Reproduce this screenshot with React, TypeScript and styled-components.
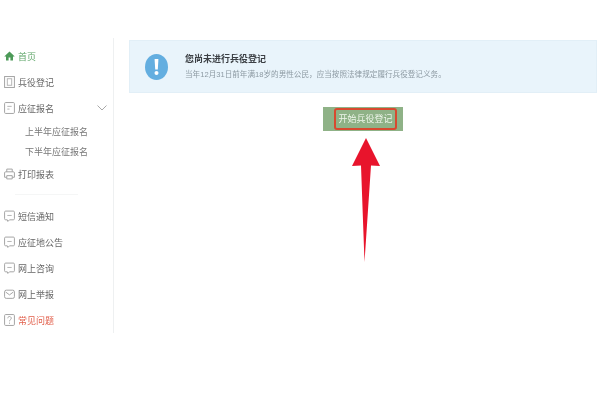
import React from "react";
import styled, { createGlobalStyle } from "styled-components";

const Global = createGlobalStyle`
  html, body { margin: 0; padding: 0; background: #fff; }
  body { font-family: "Liberation Sans", "Noto Sans CJK SC", sans-serif; }
`;

const Page = styled.div`
  position: relative;
  width: 600px;
  height: 400px;
  overflow: hidden;
  padding-top: 38px;
  box-sizing: border-box;
  filter: blur(0.6px);
`;

const Shell = styled.div`
  display: flex;
  height: 295px;
`;

const Sidebar = styled.nav`
  width: 114px;
  flex: none;
  box-sizing: border-box;
  padding-top: 5px;
  border-right: 1px solid #eef0f1;
`;

const Row = styled.div<{ $color?: string }>`
  display: flex;
  align-items: center;
  gap: 3px;
  height: 26px;
  padding-left: 4px;
  padding-right: 6px;
  font-size: 9px;
  color: ${(p) => p.$color ?? "#666"};
`;

const Chevron = styled.svg`
  margin-left: auto;
`;

const SubList = styled.div`
  padding-top: 1px;
  height: 39px;
`;

const SubRow = styled.div`
  height: 20px;
  line-height: 20px;
  padding-left: 25px;
  font-size: 9px;
  color: #777;
`;

const Divider = styled.div`
  height: 1px;
  margin: 7px 35px 8px 15px;
  background: #f5f6f6;
`;

const Main = styled.main`
  flex: 1;
  min-width: 0;
  padding: 2px 3px 0 15px;
  display: flex;
  flex-direction: column;
  align-items: center;
`;

const Banner = styled.section`
  align-self: stretch;
  height: 53px;
  display: flex;
  align-items: center;
  gap: 17px;
  padding-left: 15px;
  box-sizing: border-box;
  background: #e9f4fb;
  border: 1px solid #e2eff7;
`;

const BannerText = styled.div`
  display: flex;
  flex-direction: column;
  gap: 5px;
`;

const Title = styled.div`
  font-size: 9px;
  line-height: 11px;
  font-weight: 700;
  color: #3c4045;
`;

const Desc = styled.div`
  font-size: 7.6px;
  line-height: 10px;
  color: #8d9aa3;
`;

const StartButton = styled.button`
  margin: 14px 0 0;
  width: 80px;
  height: 24px;
  padding: 0 6px 0 11px;
  box-sizing: border-box;
  border: none;
  background: #8fb287;
  display: flex;
  align-items: center;
  justify-content: center;
  font-family: inherit;
`;

const ButtonLabel = styled.span`
  display: block;
  width: 63px;
  height: 22px;
  line-height: 18px;
  box-sizing: border-box;
  border: 2px solid #d8492f;
  border-radius: 3px;
  font-size: 9px;
  text-align: center;
  white-space: nowrap;
  color: #eef5ea;
`;

const ArrowOverlay = styled.svg`
  position: absolute;
  left: 345px;
  top: 130px;
`;

const Outline = ({ children }: { children: React.ReactNode }) => (
  <svg width="11" height="12" viewBox="0 0 10 11" fill="none" stroke="#a3a3a3" strokeWidth="0.9">
    {children}
  </svg>
);

const Bubble = () => (
  <Outline>
    <path d="M1.5 1h7a1 1 0 0 1 1 1v6a1 1 0 0 1-1 1H5L3.500 10.500 3 9H1.500a1 1 0 0 1-1-1V2a1 1 0 0 1 1-1z" />
    <path d="M3 5h4" stroke="#b5b5b5" />
  </Outline>
);

const icons = {
  home: (
    <svg width="11" height="12" viewBox="-0.5 0 11 12">
      <path d="M5 1.500 0 6.200l.6.7L1.500 6v4.500h2.600V7.400h1.800v3.100h2.600V6l.9.900.6-.7z" fill="#4c9a58" />
    </svg>
  ),
  clipboard: (
    <Outline>
      <rect x="0.5" y="0.5" width="9" height="10" />
      <rect x="3" y="2.500" width="4" height="6" stroke="#b5b5b5" />
    </Outline>
  ),
  form: (
    <Outline>
      <rect x="0.5" y="0.5" width="9" height="10" rx="1" />
      <path d="M3 4h4M3 6.500h2" stroke="#b5b5b5" />
    </Outline>
  ),
  printer: (
    <Outline>
      <path d="M2.500 3.500V1h5v2.500" />
      <path d="M2.500 8.500h-2v-4a1 1 0 0 1 1-1h7a1 1 0 0 1 1 1v4h-2" />
      <path d="M2.500 7h5v3h-5z" />
    </Outline>
  ),
  mail: (
    <Outline>
      <rect x="0.5" y="2" width="9" height="7.500" rx="1.500" />
      <path d="M1.500 3.700 5 6.300l3.500-2.600" />
    </Outline>
  ),
  help: (
    <Outline>
      <rect x="0.5" y="0.5" width="9" height="10" rx="1" />
      <path d="M3.400 3.900a1.600 1.600 0 1 1 2.400 1.400c-.6.4-.8.7-.8 1.400M5 7.900v1" />
    </Outline>
  ),
};

export default function App() {
  return (
    <>
      <Global />
      <Page>
        <Shell>
          <Sidebar>
            <Row $color="#5da568">{icons.home}首页</Row>
            <Row>{icons.clipboard}兵役登记</Row>
            <Row>
              {icons.form}应征报名
              <Chevron width="10" height="6" viewBox="0 0 10 6" fill="none" stroke="#a8a8a8" strokeWidth="1">
                <path d="M.5.5 5 5 9.500.5" />
              </Chevron>
            </Row>
            <SubList>
              <SubRow>上半年应征报名</SubRow>
              <SubRow>下半年应征报名</SubRow>
            </SubList>
            <Row>{icons.printer}打印报表</Row>
            <Divider />
            <Row><Bubble />短信通知</Row>
            <Row><Bubble />应征地公告</Row>
            <Row><Bubble />网上咨询</Row>
            <Row>{icons.mail}网上举报</Row>
            <Row $color="#e2604c">{icons.help}常见问题</Row>
          </Sidebar>
          <Main>
            <Banner>
              <svg width="23" height="26" viewBox="0 0 23 26">
                <ellipse cx="11.500" cy="13" rx="11.500" ry="13" fill="#63aee0" />
                <path d="M9.600 5h3.800l-.6 10.500h-2.600z" fill="#fff" />
                <circle cx="11.500" cy="19" r="2" fill="#fff" />
              </svg>
              <BannerText>
                <Title>您尚未进行兵役登记</Title>
                <Desc>当年12月31日前年满18岁的男性公民，应当按照法律规定履行兵役登记义务。</Desc>
              </BannerText>
            </Banner>
            <StartButton>
              <ButtonLabel>开始兵役登记</ButtonLabel>
            </StartButton>
          </Main>
        </Shell>
        <ArrowOverlay width="45" height="135" viewBox="345 130 45 135">
          <path d="M366 138 380 166 371 165.500 364.500 262 361 165.500 352 166z" fill="#e8142c" />
        </ArrowOverlay>
      </Page>
    </>
  );
}
